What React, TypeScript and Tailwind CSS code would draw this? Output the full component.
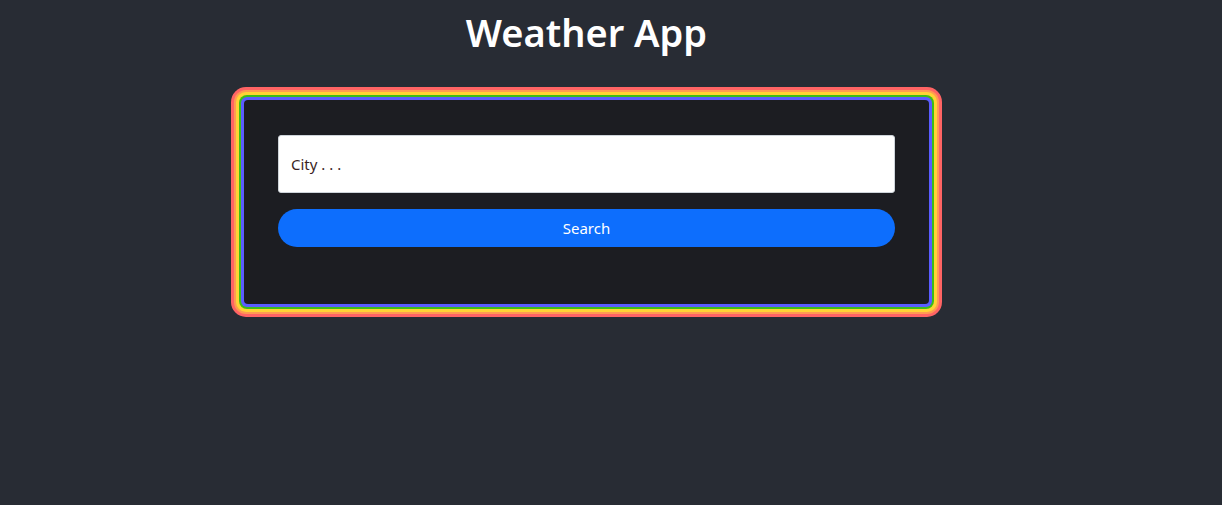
export default function App() {
  return (
    <div className="min-h-[505px] w-full bg-[#282c34] font-['Noto_Sans',sans-serif]">
      <div className="mr-[49px] flex flex-col items-center">
        <h1 className="mt-[9px] text-[38px] font-semibold leading-[46px] text-white">Weather App</h1>

        {/* rainbow frame */}
        <div className="mt-[32px] w-[711px] rounded-[15px] bg-[#ff6464] p-[3px]">
          <div className="rounded-[12px] bg-[#ff9b52] p-[2px]">
            <div className="rounded-[10px] bg-[#ffd335] p-[3px]">
              <div className="rounded-[8px] bg-[#3dbd16] p-[2px]">
                <div className="rounded-[6px] bg-[#5a5cff] p-[3px]">
                  <div className="flex h-[204px] flex-col gap-[16px] rounded-[4px] bg-[#1c1d22] px-[34px] pt-[35px]">
                    <input
                      placeholder="City . . ."
                      className="h-[58px] w-full rounded-[3px] border border-[#ced4da] bg-white px-[12px] text-[15px] text-[#212529] outline-none placeholder:text-[#3b1f1f]"
                    />
                    <button className="h-[38px] w-full rounded-full bg-[#0d6efd] text-[15px] text-white">
                      Search
                    </button>
                  </div>
                </div>
              </div>
            </div>
          </div>
        </div>
      </div>
    </div>
  );
}
